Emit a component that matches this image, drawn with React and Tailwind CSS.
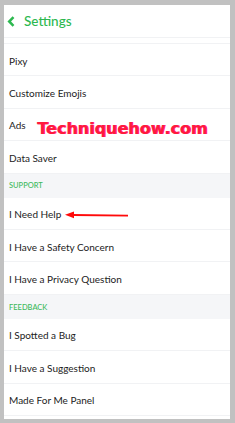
import React from "react";

const Row = ({ label, children }) => (
  <div className="relative flex h-[32.4px] items-center border-b border-[#f1f2f4] pl-[5px] pt-[3px] text-[10px] text-[#222]">
    {label}
    {children}
  </div>
);

const Section = ({ label }) => (
  <div className="flex h-[24px] items-center bg-[#f5f6f8] pl-[5px] pt-[1px] text-[7.5px] font-medium text-[#3dba5c]">
    {label}
  </div>
);

export default function App() {
  return (
    <div
      className="h-[423px] w-[235px] bg-[#c1c1c1] pt-[5px] pl-[4px] pr-[5px] pb-[4px]"
      style={{ fontFamily: "Lato, 'Open Sans', sans-serif" }}
    >
      <div className="relative h-full overflow-hidden bg-white">
        <div className="flex h-[33px] items-center gap-[9px] border-b border-[#f1f2f4] pl-[3px] text-[#2db84f]">
          <svg width="8" height="11" viewBox="0 0 8 11" className="mt-[1px]">
            <path d="M6.5 1.2 L2.2 5.5 L6.5 9.8" fill="none" stroke="#2db84f" strokeWidth="2.5" />
          </svg>
          <span className="text-[13.5px] font-medium">Settings</span>
        </div>
        <div className="h-[6px] border-b border-[#f1f2f4]" />
        <Row label="Pixy" />
        <Row label="Customize Emojis" />
        <Row label="Ads" />
        <Row label="Data Saver" />
        <Section label="SUPPORT" />
        <Row label="I Need Help">
          <svg width="64" height="8" viewBox="0 0 64 8" className="absolute left-[61px] top-[13px]">
            <path d="M8 4 L63 4.6" stroke="#ff0a0a" strokeWidth="1.8" />
            <path d="M0 3.8 L9 0.5 L9 7.2 Z" fill="#ff0a0a" />
          </svg>
        </Row>
        <Row label="I Have a Safety Concern" />
        <Row label="I Have a Privacy Question" />
        <Section label="FEEDBACK" />
        <Row label="I Spotted a Bug" />
        <Row label="I Have a Suggestion" />
        <Row label="Made For Me Panel" />
        <div
          className="absolute left-[33px] top-[112px] text-[16px] font-bold text-[#ff1a3c]"
          style={{ fontFamily: "'DejaVu Sans', sans-serif", textShadow: "1px 0 0 #ff2a8a" }}
        >
          Techniquehow.com
        </div>
      </div>
    </div>
  );
}
